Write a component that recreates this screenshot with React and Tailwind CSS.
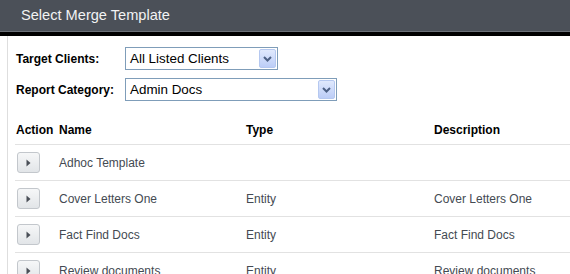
import React from "react";

function SelectBox({ width, value }) {
  return (
    <div
      className="relative flex items-center h-[23px] border border-[#7f9db9] bg-white pl-[4px] text-[13.4px] text-black"
      style={{ width }}
    >
      <span className="leading-none">{value}</span>
      <div className="absolute right-[1px] top-[1px] bottom-[1px] w-[17px] rounded-[2px] border border-[#b5c8f0] bg-gradient-to-b from-[#e0e9fd] to-[#bccdf7] flex items-center justify-center">
        <svg width="9" height="6" viewBox="0 0 9 6">
          <path d="M1 1 L4.5 4.5 L8 1" stroke="#4d6185" strokeWidth="2" fill="none" />
        </svg>
      </div>
    </div>
  );
}

function PlayBtn() {
  return (
    <div className="w-[23px] h-[21px] rounded-[3px] border border-[#c3c7cc] bg-gradient-to-b from-[#f6f7f8] to-[#e2e5e8] flex items-center justify-center">
      <svg width="5" height="8" viewBox="0 0 5 8">
        <path d="M0.5 0.5 L4.5 4 L0.5 7.5 Z" fill="#4a4f57" />
      </svg>
    </div>
  );
}

const rows = [
  ["Adhoc Template", "", ""],
  ["Cover Letters One", "Entity", "Cover Letters One"],
  ["Fact Find Docs", "Entity", "Fact Find Docs"],
  ["Review documents", "Entity", "Review documents"],
];

export default function App() {
  return (
    <div className="w-[570px] h-[274px] overflow-hidden bg-white" style={{ fontFamily: '"Liberation Sans", Arial, sans-serif' }}>
      <div className="h-[31px] bg-[#4b5058] flex items-center pl-[21px] text-[14.6px] text-[#f2f3f4]">
        Select Merge Template
      </div>
      <div className="h-[1px] bg-[#6b7077]" />
      <div className="h-[4px] bg-black" />
      <div className="ml-[7px] border-l border-[#dedede] pl-[8px] pt-[11px]">
        <div className="flex items-center h-[23px]">
          <div className="w-[109px] text-[12px] font-bold text-black">Target Clients:</div>
          <SelectBox width={153} value="All Listed Clients" />
        </div>
        <div className="flex items-center h-[23px] mt-[8px]">
          <div className="w-[109px] text-[12px] font-bold text-black">Report Category:</div>
          <SelectBox width={212} value="Admin Docs" />
        </div>
        <div className="mt-[15px] ml-[-1px]">
          <div className="flex items-center h-[29px] border-b border-[#e2e2e2] text-[12px] font-bold text-black pl-[1px]">
            <div className="w-[43px]">Action</div>
            <div className="w-[187px]">Name</div>
            <div className="w-[188px]">Type</div>
            <div>Description</div>
          </div>
          {rows.map((r, i) => (
            <div key={i} className="flex items-center h-[36px] border-b border-[#e2e2e2] text-[12px] text-[#444a52]">
              <div className="w-[44px] pl-[2px]"><PlayBtn /></div>
              <div className="w-[187px]">{r[0]}</div>
              <div className="w-[188px]">{r[1]}</div>
              <div>{r[2]}</div>
            </div>
          ))}
        </div>
      </div>
    </div>
  );
}
